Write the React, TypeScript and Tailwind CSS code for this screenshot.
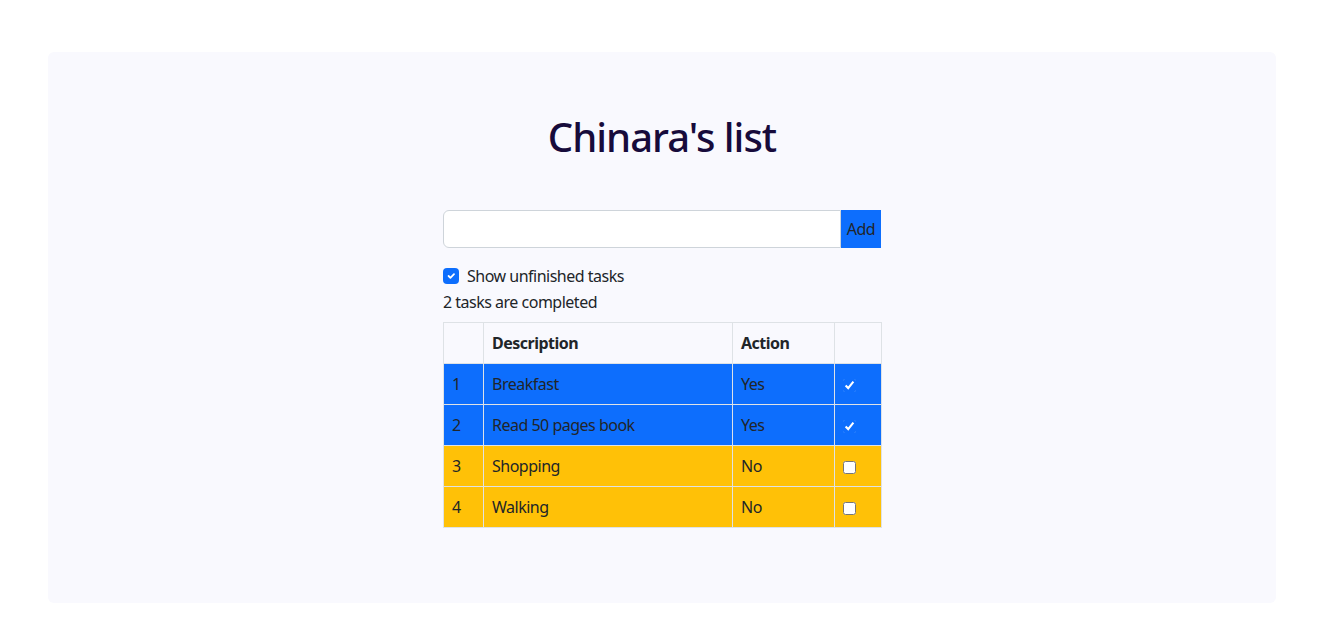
import React, { useState } from "react";

interface Task {
  id: number;
  description: string;
  done: boolean;
}

const initialTasks: Task[] = [
  { id: 1, description: "Breakfast", done: true },
  { id: 2, description: "Read 50 pages book", done: true },
  { id: 3, description: "Shopping", done: false },
  { id: 4, description: "Walking", done: false },
];

export default function App() {
  const [tasks, setTasks] = useState<Task[]>(initialTasks);
  const [showUnfinished, setShowUnfinished] = useState(true);
  const [text, setText] = useState("");

  const completed = tasks.filter((t) => t.done).length;

  const toggle = (id: number) =>
    setTasks((prev) =>
      prev.map((t) => (t.id === id ? { ...t, done: !t.done } : t)),
    );

  return (
    <div
      className="min-h-screen bg-white pt-[52px] pl-[48px] pb-[37px] text-[#212529] tracking-[-0.5px]"
      style={{ fontFamily: '"Noto Sans", "Open Sans", sans-serif' }}
    >
      <div className="bg-[#f9f9fe] rounded-md w-[1228px] h-[551px] flex flex-col items-center pt-[61px]">
        <h1 className="text-[40px] leading-[48px] font-medium text-[#170b3b] tracking-[-1px]">
          Chinara's list
        </h1>

        <div className="w-[438px] mt-[49px] flex flex-col">
          {/* new task */}
          <div className="flex h-[38px]">
            <input
              value={text}
              onChange={(e) => setText(e.target.value)}
              className="flex-1 bg-white border border-[#ced4da] rounded-l-md px-3 outline-none"
            />
            <button className="w-[40px] bg-[#0d6efd] text-[#212529] text-base leading-6">
              Add
            </button>
          </div>

          {/* filter */}
          <label className="flex items-center gap-2 mt-4 h-6 text-base cursor-pointer">
            <span
              onClick={() => setShowUnfinished(!showUnfinished)}
              className={`w-4 h-4 rounded flex items-center justify-center ${
                showUnfinished
                  ? "bg-[#0d6efd]"
                  : "bg-white border border-[#ced4da]"
              }`}
            >
              {showUnfinished && (
                <svg viewBox="0 0 20 20" className="w-3 h-3">
                  <path
                    d="M6 10l3 3 6-6"
                    fill="none"
                    stroke="#fff"
                    strokeWidth="3"
                    strokeLinecap="round"
                    strokeLinejoin="round"
                  />
                </svg>
              )}
            </span>
            Show unfinished tasks
          </label>
          <div className="mt-[2px] h-6 leading-6 text-base">
            {completed} tasks are completed
          </div>

          {/* tasks */}
          <table className="mt-2 w-full table-fixed border-collapse text-base">
            <colgroup>
              <col className="w-[40px]" />
              <col className="w-[249px]" />
              <col className="w-[102px]" />
              <col className="w-[47px]" />
            </colgroup>
            <thead>
              <tr>
                <th className="border border-[#dee2e6] px-2 py-2 leading-6 text-left font-bold"></th>
                <th className="border border-[#dee2e6] px-2 py-2 leading-6 text-left font-bold">
                  Description
                </th>
                <th className="border border-[#dee2e6] px-2 py-2 leading-6 text-left font-bold">
                  Action
                </th>
                <th className="border border-[#dee2e6] px-2 py-2 leading-6"></th>
              </tr>
            </thead>
            <tbody>
              {tasks
                .filter((t) => showUnfinished || t.done)
                .map((t) => (
                  <tr
                    key={t.id}
                    className={t.done ? "bg-[#0d6efd]" : "bg-[#ffc107]"}
                  >
                    <td className="border border-[#dee2e6] px-2 py-2 leading-6">
                      {t.id}
                    </td>
                    <td className="border border-[#dee2e6] px-2 py-2 leading-6">
                      {t.description}
                    </td>
                    <td className="border border-[#dee2e6] px-2 py-2 leading-6">
                      {t.done ? "Yes" : "No"}
                    </td>
                    <td className="border border-[#dee2e6] pl-[8px] pr-2 py-2 leading-6">
                      <input
                        type="checkbox"
                        checked={t.done}
                        onChange={() => toggle(t.id)}
                        className="accent-[#0d6efd] m-0 align-middle"
                      />
                    </td>
                  </tr>
                ))}
            </tbody>
          </table>
        </div>
      </div>
    </div>
  );
}
